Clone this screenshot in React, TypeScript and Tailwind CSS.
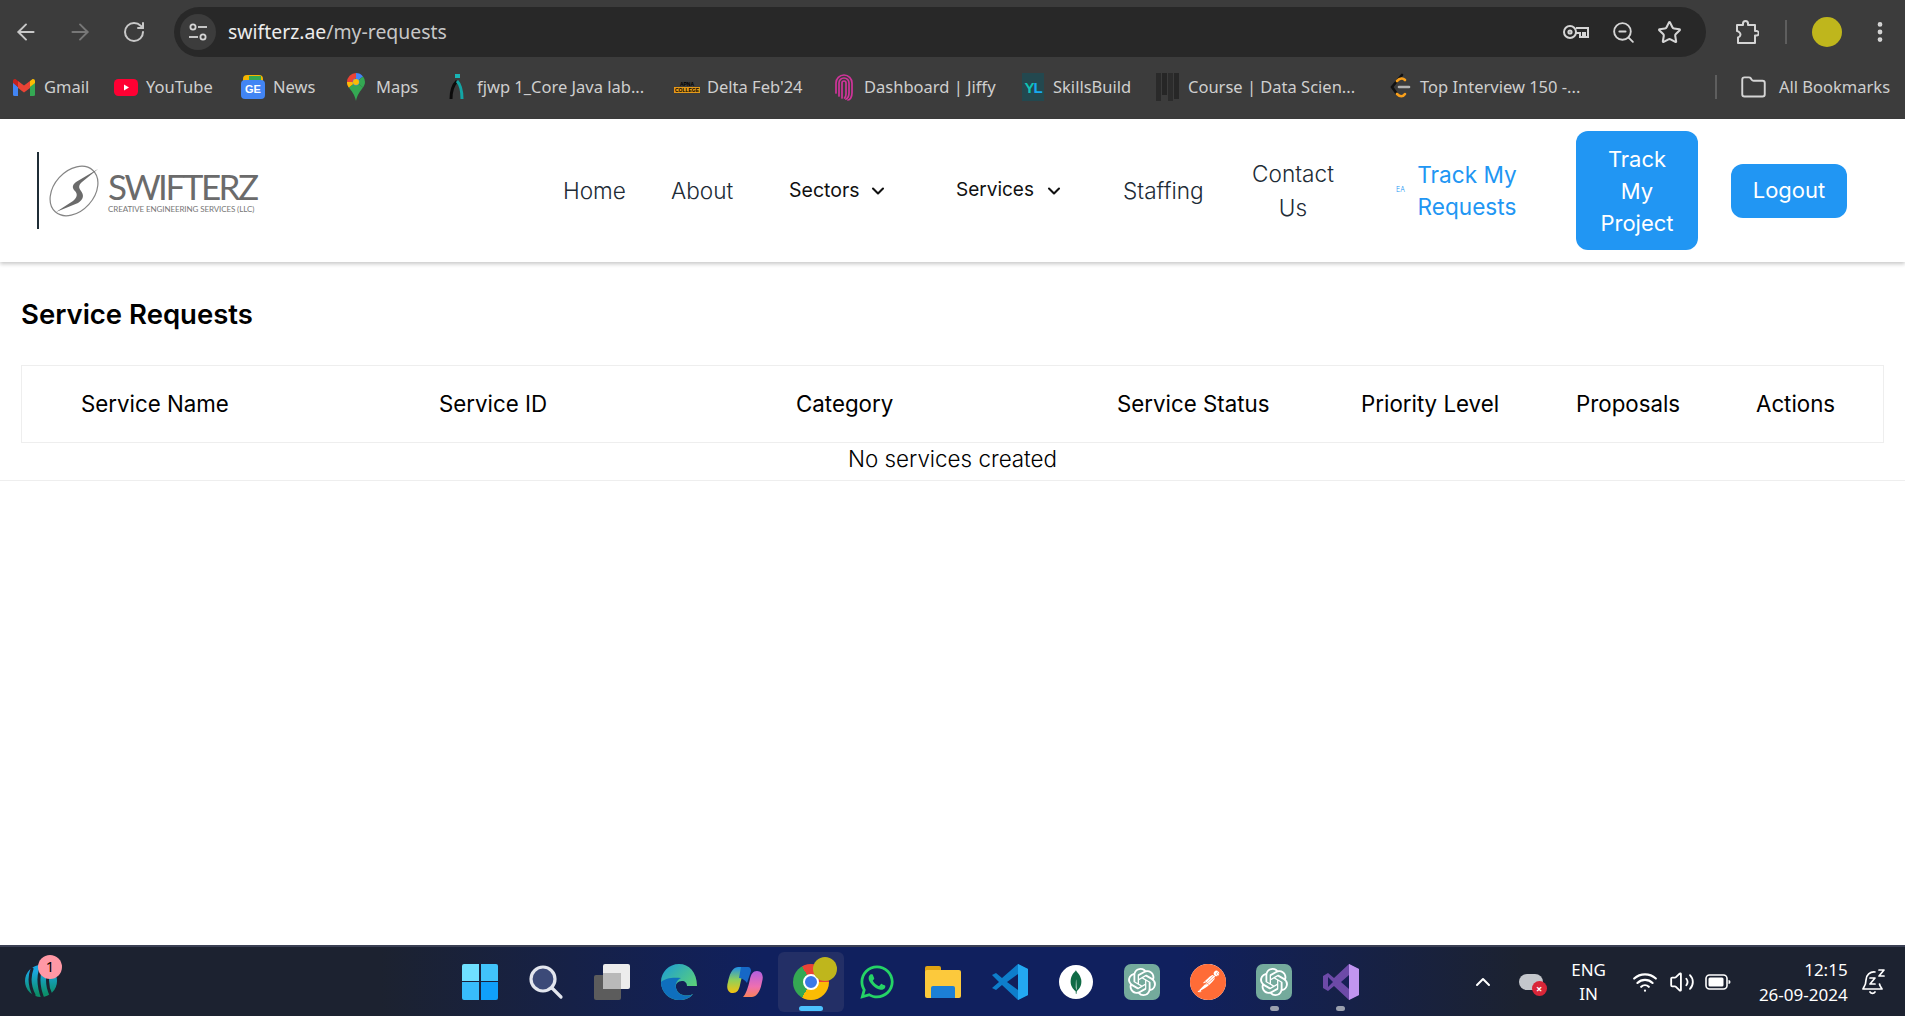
import React from "react"
import { ArrowLeft, ArrowRight, RotateCw, ZoomOut, Star, ChevronDown, ChevronUp, Folder, Wifi, Volume2, EllipsisVertical } from "lucide-react"
import { FaWhatsapp } from "react-icons/fa"
import { SiOpenai, SiPostman, SiMongodb } from "react-icons/si"

const chrome = "font-['Noto_Sans','Open_Sans',sans-serif]"
const poppins = "font-['Inter','Noto_Sans',sans-serif]"

function TuneIcon() {
    return (
        <svg width="22" height="22" viewBox="0 0 22 22" fill="none" stroke="#d5d5d5" strokeWidth="1.8">
            <circle cx="6" cy="6" r="2.6" />
            <path d="M11 6h9" />
            <circle cx="16" cy="16" r="2.6" />
            <path d="M2 16h9" />
        </svg>
    )
}

function KeyIcon() {
    return (
        <svg width="28" height="20" viewBox="0 0 28 20" fill="none" stroke="#d5d5d5" strokeWidth="2">
            <circle cx="8" cy="10" r="6" />
            <circle cx="8" cy="10" r="1.6" />
            <path d="M14 6h12v9h-3v-4h-2v4h-3v-4h-4" />
        </svg>
    )
}

function ExtensionIcon() {
    return (
        <svg width="26" height="26" viewBox="0 0 26 26" fill="none" stroke="#d5d5d5" strokeWidth="2" strokeLinejoin="round">
            <path d="M4 6h6V4.5a2.5 2.5 0 0 1 5 0V6h7v6h1.5a2.2 2.2 0 0 1 0 4.4H22V24H5v-5.5a3 3 0 0 0 1-5.500a3 3 0 0 0-2-1z" />
        </svg>
    )
}

function GmailIcon() {
    return (
        <svg width="22" height="17" viewBox="0 0 22 17">
            <path d="M0 3v12.500A1.500 1.500 0 0 0 1.500 17H5V8z" fill="#4285f4" />
            <path d="M22 3v12.500a1.500 1.500 0 0 1-1.500 1.500H17V8z" fill="#34a853" />
            <path d="M5 8 0 4V2C0 .5 1.800-.500 3 .500L5 2z" fill="#c5221f" />
            <path d="M5 9V2l6 4.500L17 2v7l-6 4.500z" fill="#ea4335" />
            <path d="M17 8V2l2-1.500C20.200-.500 22 .5 22 2v2z" fill="#fbbc04" />
        </svg>
    )
}

function YouTubeIcon() {
    return (
        <svg width="24" height="17" viewBox="0 0 24 17">
            <rect width="24" height="17" rx="4.500" fill="#ff0033" />
            <path d="M10 5.500v6l5-3z" fill="#fff" />
        </svg>
    )
}

function NewsIcon() {
    return (
        <div className="relative h-[24px] w-[24px]">
            <div className="absolute left-[2px] top-0 h-[8px] w-[20px] rounded-t-sm bg-[#f4b400]" />
            <div className="absolute left-[8px] top-[1px] h-[6px] w-[12px] bg-[#34a853]" />
            <div className="absolute bottom-0 left-0 flex h-[19px] w-[24px] items-center justify-center rounded-sm bg-[#4285f4] font-['Liberation_Sans',sans-serif] text-[11px] font-bold leading-none text-white">GE</div>
        </div>
    )
}

function MapsIcon() {
    return (
        <svg width="18" height="28" viewBox="0 0 18 28">
            <path d="M9 0a9 9 0 0 0-9 9c0 2.200.7 4 1.800 5.500L9 5z" fill="#ea4335" />
            <path d="M9 0a9 9 0 0 1 7 3.400L9 9z" fill="#4285f4" />
            <path d="M16 3.400A9 9 0 0 1 18 9c0 2-.8 3.800-2 5.500L9 9z" fill="#34a853" />
            <path d="M1.800 14.500 9 9l7 5.500c-2.500 3.500-5.800 7-7 13.500-1.200-6.500-4.500-10-7.200-13.500z" fill="#34a853" />
            <path d="M1.800 14.500C.7 13 0 11.200 0 9l9 0z" fill="#fbbc04" />
            <circle cx="9" cy="9" r="3.400" fill="#4285f4" />
            <circle cx="9" cy="9" r="3" fill="#fbbc04" />
        </svg>
    )
}

function FjwpIcon() {
    return (
        <svg width="18" height="26" viewBox="0 0 18 26" fill="none" strokeWidth="3">
            <path d="M3 25C3 16 6 10 9 7" stroke="#0b0b0b" />
            <path d="M9 7c3 3 5 9 5 18" stroke="#13a5a5" />
            <rect x="7" y="0" width="5" height="4" fill="#19b5b5" stroke="none" />
        </svg>
    )
}

function DeltaIcon() {
    return (
        <div className="flex w-[22px] flex-col items-center font-['Liberation_Sans',sans-serif] text-[5px] font-bold leading-[6px]">
            <span className="text-black">APNA</span>
            <span className="bg-[#e59a19] px-[1px] text-black">COLLEGE</span>
        </div>
    )
}

function FingerprintIcon() {
    return (
        <svg width="20" height="28" viewBox="0 0 20 28" fill="none" stroke="#d0349a" strokeWidth="1.700" strokeLinecap="round">
            <path d="M2 20V10a8 8 0 0 1 16 0v10c0 4-2 7-4 7" />
            <path d="M5 23V10a5 5 0 0 1 10 0v10c0 3-1 5-3 6" />
            <path d="M8 25V10a2 2 0 0 1 4 0v11c0 2-.5 3-1.500 4" />
        </svg>
    )
}

function SkillsIcon() {
    return (
        <div className="flex h-[28px] w-[22px] items-center justify-center bg-[#23484f] font-['Liberation_Sans',sans-serif] text-[15px] font-bold leading-none tracking-[-1px]">
            <span className="text-[#0fc4b5]">Y</span>
            <span className="text-[#18a9f0]">L</span>
        </div>
    )
}

function CourseIcon() {
    return (
        <div className="flex h-[28px] w-[24px] gap-[1px]">
            <div className="h-[28px] w-[5px] bg-[#2a2a2a]" />
            <div className="h-[22px] w-[5px] bg-[#262626]" />
            <div className="h-[28px] w-[5px] bg-[#2c2c2c]" />
            <div className="h-[26px] w-[5px] bg-[#272727]" />
        </div>
    )
}

function LeetIcon() {
    return (
        <svg width="22" height="28" viewBox="0 0 22 28" fill="none" strokeWidth="2.600" strokeLinecap="round">
            <path d="M13 2 3 14l5 7" stroke="#111" />
            <path d="M8 8c3-3 6-3 8-1" stroke="#f89f1b" />
            <path d="M8 21c3 3 6 3 8 0" stroke="#f89f1b" />
            <path d="M10 14h10" stroke="#b3b3b3" />
        </svg>
    )
}

const bookmarks = [
    { label: "Gmail", icon: <GmailIcon />, cls: "w-[102px]" },
    { label: "YouTube", icon: <YouTubeIcon />, cls: "w-[127px]" },
    { label: "News", icon: <NewsIcon />, cls: "w-[103px]" },
    { label: "Maps", icon: <MapsIcon />, cls: "w-[101px]" },
    { label: "fjwp 1_Core Java lab...", icon: <FjwpIcon />, cls: "w-[230px]" },
    { label: "Delta Feb'24", icon: <DeltaIcon />, cls: "w-[157px]" },
    { label: "Dashboard | Jiffy", icon: <FingerprintIcon />, cls: "w-[189px]" },
    { label: "SkillsBuild", icon: <SkillsIcon />, cls: "w-[135px]" },
    { label: "Course | Data Scien...", icon: <CourseIcon />, cls: "w-[232px]" },
    { label: "Top Interview 150 -...", icon: <LeetIcon />, cls: "w-[327px]" },
]

function BrowserBar() {
    return (
        <div className={`${chrome} h-[119px] shrink-0 bg-[#3c3c3c] text-[#cfcfcf]`}>
            <div className="flex h-[57px] items-center pl-[13px] pr-[12px] pt-[7px]">
                <ArrowLeft size={26} color="#c8c8c8" strokeWidth={1.800} />
                <ArrowRight size={26} color="#777777" strokeWidth={1.800} className="ml-[28px]" />
                <RotateCw size={24} color="#c8c8c8" strokeWidth={2} className="ml-[29px]" />
                <div className="ml-[28px] flex h-[50px] w-[1532px] shrink-0 items-center rounded-full bg-[#282828] pl-[6px] pr-[24px]">
                    <div className="flex h-[36px] w-[36px] items-center justify-center rounded-full bg-[#3c3c3c]">
                        <TuneIcon />
                    </div>
                    <div className="ml-[12px] text-[19.400px] text-[#c7c7c7]">
                        <span className="text-[#ececec]">swifterz.ae</span>/my-requests
                    </div>
                    <div className="ml-auto flex items-center gap-[21px]">
                        <KeyIcon />
                        <ZoomOut size={25} color="#d5d5d5" strokeWidth={1.800} />
                        <Star size={25} color="#d5d5d5" strokeWidth={2} />
                    </div>
                </div>
                <div className="ml-[27px]"><ExtensionIcon /></div>
                <div className="ml-[26px] h-[24px] w-[2px] bg-[#5e5e5e]" />
                <div className="ml-[25px] h-[30px] w-[30px] rounded-full bg-[#bfb61c]" />
                <EllipsisVertical size={26} color="#d5d5d5" strokeWidth={2.400} className="ml-[25px] shrink-0" />
            </div>
            <div className="flex h-[60px] items-center pl-[12px]">
                {bookmarks.map(b => (
                    <div key={b.label} className={`flex shrink-0 items-center ${b.cls}`}>
                        <div className="flex w-[24px] shrink-0 justify-center">{b.icon}</div>
                        <span className="ml-[8px] whitespace-nowrap text-[16.500px]">{b.label}</span>
                    </div>
                ))}
                <div className="h-[24px] w-[2px] bg-[#5e5e5e]" />
                <Folder size={27} color="#d5d5d5" strokeWidth={1.700} className="ml-[23px]" />
                <span className="ml-[12px] whitespace-nowrap text-[16.500px]">All Bookmarks</span>
            </div>
        </div>
    )
}

function Logo() {
    return (
        <div className="flex h-[77px] w-[526px] shrink-0 items-center">
            <div className="flex h-[77px] items-center border-l-2 border-[#1f2d36] pl-[9px]">
                <svg width="54" height="52" viewBox="0 0 54 52" fill="none" className="shrink-0">
                    <ellipse cx="26" cy="26" rx="28" ry="20" transform="rotate(-48 26 26)" stroke="#858585" strokeWidth="1.200" />
                    <path d="M50 4 28 17c-4 3-4 6-1 9s2 7-2 10L8 47l22-9c6-4 6-8 3-12s-2-6 1-9z" fill="#6b6b6b" />
                </svg>
                <div className="ml-[6px] flex flex-col">
                    <span className="font-['Lato',sans-serif] text-[35px] font-normal leading-[36px] tracking-[-2.500px] text-[#6b6b6b]">SWIFTERZ</span>
                    <span className="whitespace-nowrap font-['Lato',sans-serif] text-[8px] leading-[10px] tracking-[-0.100px] text-[#777777]">CREATIVE ENGINEERING SERVICES (LLC)</span>
                </div>
            </div>
        </div>
    )
}

function Header() {
    return (
        <header className={`${poppins} relative flex h-[143px] shrink-0 items-center bg-white pl-[37px] shadow-[0_2px_4px_rgba(0,0,0,0.22)]`}>
            <Logo />
            <nav className="flex shrink-0 items-center text-[22.600px] font-light text-[#212b36]">
                <span className="w-[108px]">Home</span>
                <span className="w-[118px]">About</span>
                <span className="flex w-[167px] items-center text-[19.500px] font-normal text-[#111111]">
                    Sectors
                    <ChevronDown size={20} strokeWidth={2.500} className="ml-[8px]" />
                </span>
                <span className="flex w-[167px] items-center text-[19px] font-normal text-[#111111]">
                    Services
                    <ChevronDown size={20} strokeWidth={2.500} className="ml-[10px]" />
                </span>
                <span className="w-[115px]">Staffing</span>
                <span className="w-[110px] text-center leading-[34px]">Contact Us</span>
                <span className="ml-[48px] w-[10px] text-[7px] text-[#2196f3]">EA</span>
                <span className="ml-[6px] w-[110px] text-center font-normal leading-[32px] text-[#2196f3]">Track My Requests</span>
            </nav>
            <button className="ml-[54px] h-[119px] w-[122px] shrink-0 rounded-[12px] bg-[#2196f3] text-[22px] font-normal leading-[32px] text-white">
                Track<br />My<br />Project
            </button>
            <button className="ml-[33px] h-[54px] w-[116px] shrink-0 rounded-[12px] bg-[#2196f3] text-[22px] font-normal text-white">Logout</button>
        </header>
    )
}

function ServiceRequests() {
    return (
        <main className={`${poppins} min-h-0 flex-1 bg-white text-black`}>
            <h1 className="pl-[21px] pt-[34px] text-[27.500px] font-semibold leading-[36px]">Service Requests</h1>
            <div className="mx-[21px] mt-[33px] flex h-[78px] items-center border border-[#eeeeee] text-[22.300px]">
                <span className="w-[417px] pl-[59px]">Service Name</span>
                <span className="w-[357px]">Service ID</span>
                <span className="w-[321px]">Category</span>
                <span className="w-[244px]">Service Status</span>
                <span className="w-[215px]">Priority Level</span>
                <span className="w-[180px]">Proposals</span>
                <span>Actions</span>
            </div>
            <div className="border-b border-[#eeeeee] pb-[6px] pt-[1px] text-center text-[22.400px] font-light leading-[30px]">No services created</div>
        </main>
    )
}

function WidgetIcon() {
    return (
        <svg width="34" height="34" viewBox="0 0 34 34">
            <defs>
                <linearGradient id="widgetFill" x1="0" y1="0" x2="0" y2="1">
                    <stop offset="0.200" stopColor="#1aa7e0" />
                    <stop offset="0.900" stopColor="#0c8f6a" />
                </linearGradient>
            </defs>
            <circle cx="17" cy="16" r="16" fill="url(#widgetFill)" />
            <path d="M8 4C5 12 6 22 10 30M16 6c-2 8-1 18 3 28M24 10c-1 6 0 14 3 20" fill="none" stroke="#1c2230" strokeWidth="3" strokeLinecap="round" />
        </svg>
    )
}

function WinIcon() {
    return (
        <div className="grid h-[36px] w-[36px] grid-cols-2 gap-[1.500px]">
            <div className="rounded-tl-[2px] bg-[#6fe0ff]" />
            <div className="rounded-tr-[2px] bg-[#41c4fb]" />
            <div className="rounded-bl-[2px] bg-[#38bdfb]" />
            <div className="rounded-br-[2px] bg-[#10a0fa]" />
        </div>
    )
}

function SearchIcon() {
    return (
        <svg width="36" height="36" viewBox="0 0 36 36" fill="#3c4a78" stroke="#e3e6ee" strokeWidth="3.200" strokeLinecap="round">
            <circle cx="15" cy="15" r="12" />
            <path d="M24 24l9 9" fill="none" />
        </svg>
    )
}

function TaskViewIcon() {
    return (
        <div className="relative h-[36px] w-[36px]">
            <div className="absolute bottom-0 left-0 h-[25px] w-[27px] rounded-[2px] bg-[#5c5c5c]" />
            <div className="absolute right-0 top-0 h-[25px] w-[27px] rounded-[2px] bg-[#ececec]" />
            <div className="absolute left-[9px] top-[9px] h-[16px] w-[18px] bg-[#b9b9b9]" />
        </div>
    )
}

function EdgeIcon() {
    return (
        <svg width="36" height="36" viewBox="0 0 36 36">
            <defs>
                <linearGradient id="edgeTop" x1="0" y1="0" x2="1" y2="1">
                    <stop offset="0" stopColor="#1a9bd8" />
                    <stop offset="1" stopColor="#6ee05e" />
                </linearGradient>
            </defs>
            <path d="M18 0C8 0 0 8 0 18c0 10 8 18 18 18 6 0 11-2 14-6-6 3-15 2-17-6-1-4 2-7 6-7 3 0 5 2 5 5h10C36 8 28 0 18 0z" fill="url(#edgeTop)" />
            <path d="M0 18C0 28 8 36 18 36c6 0 11-2 14-6-6 3-15 2-17-6-1-4 1-8 5-10-8-1-16 0-20 4z" fill="#0f6fbd" />
        </svg>
    )
}

function CopilotIcon() {
    return (
        <svg width="36" height="36" viewBox="0 0 36 36">
            <defs>
                <linearGradient id="copA" x1="0" y1="0" x2="0" y2="1">
                    <stop offset="0" stopColor="#1f8fe8" />
                    <stop offset="0.500" stopColor="#8fd05a" />
                    <stop offset="1" stopColor="#f6c20f" />
                </linearGradient>
                <linearGradient id="copB" x1="0" y1="0" x2="0" y2="1">
                    <stop offset="0" stopColor="#b35fe0" />
                    <stop offset="0.600" stopColor="#ee6fb0" />
                    <stop offset="1" stopColor="#f9825a" />
                </linearGradient>
            </defs>
            <path d="M11 3h9c-3 3-5 9-7 18-1 5-3 8-7 8-5 0-7-5-5-11 1-6 4-15 10-15z" fill="url(#copA)" />
            <path d="M25 33h-9c3-3 5-9 7-18 1-5 3-8 7-8 5 0 7 5 5 11-1 6-4 15-10 15z" fill="url(#copB)" />
            <path d="M14 3h7c2 0 3 2 3 4l-4 12c-2-3-5-5-8-5z" fill="#1668c7" />
        </svg>
    )
}

function ChromeIcon() {
    return (
        <div className="relative h-[36px] w-[36px]">
            <div className="h-[36px] w-[36px] rounded-full bg-[conic-gradient(from_-30deg,#ea4335_0deg_120deg,#fbbc04_120deg_240deg,#34a853_240deg_360deg)]" />
            <div className="absolute left-[10px] top-[10px] h-[16px] w-[16px] rounded-full border-2 border-white bg-[#3b78e7]" />
            <div className="absolute -right-[8px] -top-[7px] h-[24px] w-[24px] rounded-full bg-[#bfb61c]" />
        </div>
    )
}

function FilesIcon() {
    return (
        <div className="relative h-[36px] w-[36px]">
            <div className="absolute left-0 top-[2px] h-[8px] w-[16px] rounded-t-[2px] bg-[#e0a312]" />
            <div className="absolute bottom-[2px] left-0 right-0 top-[6px] rounded-[2px] bg-[#fcc93c]" />
            <div className="absolute bottom-[2px] left-[6px] h-[12px] w-[24px] rounded-t-[2px] bg-[#1c7fd6]" />
        </div>
    )
}

function VsCodeIcon() {
    return (
        <svg width="36" height="36" viewBox="0 0 36 36">
            <path d="M26 0 36 5v26l-10 5-16-15-6 5-4-2 7-6-7-7 4-2 6 5z" fill="#0e7ecb" />
            <path d="M26 0 36 5v26l-10 5z" fill="#23a8f2" />
            <path d="M26 10 15 18l11 8z" fill="#121f5a" />
        </svg>
    )
}

function VisualStudioIcon() {
    return (
        <svg width="36" height="36" viewBox="0 0 36 36">
            <path d="M26 0 36 5v26l-10 5-15-14-6 5-5-3V12l5-3 6 5z" fill="#6d4aa8" />
            <path d="M26 0 36 5v26l-10 5z" fill="#c195f0" />
            <path d="M26 11 18 18l8 7z" fill="#161f55" />
            <path d="M5 13v10l5-5z" fill="#161f55" />
        </svg>
    )
}

function ChatGptTile() {
    return (
        <div className="flex h-[36px] w-[36px] items-center justify-center rounded-[7px] bg-[#74aa9c]">
            <SiOpenai size={28} color="#ffffff" />
        </div>
    )
}

const taskbarApps = [
    { key: "start", icon: <WinIcon /> },
    { key: "search", icon: <SearchIcon /> },
    { key: "taskview", icon: <TaskViewIcon /> },
    { key: "edge", icon: <EdgeIcon /> },
    { key: "copilot", icon: <CopilotIcon /> },
    { key: "chrome", icon: <ChromeIcon />, active: true },
    { key: "whatsapp", icon: <FaWhatsapp size={38} color="#25d366" /> },
    { key: "files", icon: <FilesIcon /> },
    { key: "vscode", icon: <VsCodeIcon /> },
    {
        key: "mongo",
        icon: (
            <div className="flex h-[34px] w-[34px] items-center justify-center rounded-full bg-white">
                <SiMongodb size={24} color="#0f6b45" />
            </div>
        ),
    },
    { key: "gpt1", icon: <ChatGptTile /> },
    {
        key: "postman",
        icon: (
            <div className="flex h-[36px] w-[36px] items-center justify-center rounded-full bg-white">
                <SiPostman size={36} color="#ff6c37" />
            </div>
        ),
    },
    { key: "gpt2", icon: <ChatGptTile />, running: true },
    { key: "vs", icon: <VisualStudioIcon />, running: true },
]

function Taskbar() {
    return (
        <footer className="relative flex h-[71px] shrink-0 items-center border-t-2 border-[#3b4054] bg-[linear-gradient(90deg,#1c2230_0%,#1c2230_20%,#10205e_40%,#10205e_62%,#1c2230_80%,#1c2230_100%)] font-['Noto_Sans','Open_Sans',sans-serif] text-white">
            <div className="relative ml-[24px] h-[34px] w-[34px] shrink-0">
                <WidgetIcon />
                <div className="absolute -right-[4px] -top-[10px] flex h-[24px] w-[24px] items-center justify-center rounded-full bg-[#ff98a5] text-[15px] leading-none text-black">1</div>
            </div>
            <div className="ml-[389px] flex shrink-0 items-center">
                {taskbarApps.map(app => (
                    <div key={app.key} className={`relative flex h-[60px] w-[66.200px] items-center justify-center rounded-[6px] ${app.active ? "bg-[#232f66]" : ""}`}>
                        {app.icon}
                        {app.active && <div className="absolute bottom-[1px] h-[5px] w-[24px] rounded-full bg-[#4cc2ff]" />}
                        {app.running && <div className="absolute bottom-[1px] h-[5px] w-[9px] rounded-full bg-[#9aa0ae]" />}
                    </div>
                ))}
            </div>
            <div className="ml-[97px] flex shrink-0 items-center">
                <ChevronUp size={24} strokeWidth={2} />
                <div className="relative ml-[24px] h-[16px] w-[24px] rounded-full bg-[#c4c7cc]">
                    <div className="absolute -bottom-[6px] -right-[4px] flex h-[15px] w-[15px] items-center justify-center rounded-full bg-[#d92638] text-[11px] font-bold leading-none">×</div>
                </div>
                <div className="ml-[23px] w-[46px] text-center text-[17px] leading-[24px]">ENG<br />IN</div>
                <Wifi size={26} strokeWidth={2} className="ml-[20px]" />
                <Volume2 size={26} strokeWidth={1.700} className="ml-[11px]" />
                <svg width="26" height="18" viewBox="0 0 26 18" fill="none" className="ml-[10px]">
                    <rect x="1" y="2" width="21" height="14" rx="3.500" stroke="#fff" strokeWidth="1.600" />
                    <rect x="3.500" y="4.500" width="15" height="9" rx="1.500" fill="#fff" />
                    <path d="M23.500 7v4a2 2 0 0 0 0-4z" fill="#fff" />
                </svg>
                <div className="ml-[9px] w-[108px] text-right text-[17px] leading-[25px]">12:15<br />26-09-2024</div>
                <svg width="26" height="28" viewBox="0 0 26 28" fill="none" stroke="#fff" strokeWidth="1.700" strokeLinecap="round" strokeLinejoin="round" className="ml-[12px]">
                    <path d="M15 4a8 8 0 0 0-9 8c0 6-3 8-3 9h19c0-1-2-2-2.500-5" />
                    <path d="M10 24a3 3 0 0 0 5 0" />
                    <path d="M10 10h5l-5 6h5" />
                    <path d="M19 2h5l-5 6h5" />
                </svg>
            </div>
        </footer>
    )
}

export default function App() {
    return (
        <div className="flex h-screen w-full flex-col overflow-hidden bg-white">
            <BrowserBar />
            <Header />
            <ServiceRequests />
            <Taskbar />
        </div>
    )
}
